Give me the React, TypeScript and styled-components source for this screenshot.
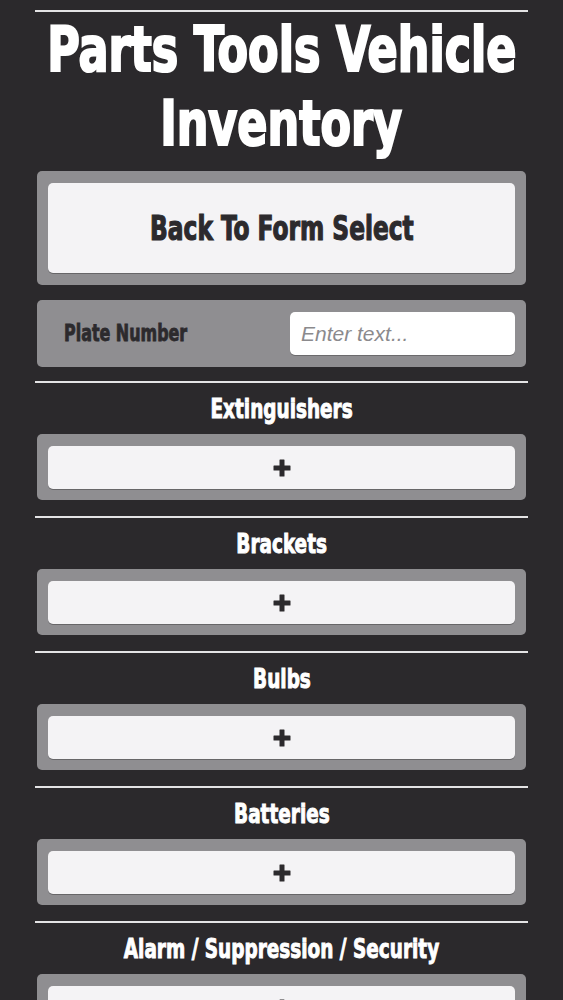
import React from 'react';
import styled, { createGlobalStyle } from 'styled-components';

const GlobalStyle = createGlobalStyle`
  html, body {
    margin: 0;
    padding: 0;
    background: #2b292c;
    overflow-x: hidden;
  }
`;

// Impact-like face: bold condensed, squeezed a bit further below
const display = `"DejaVu Sans", sans-serif`;

const Page = styled.div`
  width: 493px;
  margin-left: 35px;
  padding-top: 10px;
  display: flex;
  flex-direction: column;
`;

const Divider = styled.div`
  height: 2px;
  background: #e4e3e5;
`;

const Squeeze = styled.span<{ $origin?: string; $scale?: number }>`
  display: inline-block;
  white-space: nowrap;
  font-family: ${display};
  font-stretch: condensed;
  font-weight: 700;
  -webkit-text-stroke: 0.035em currentColor;
  transform: scaleX(${props => props.$scale ?? 0.76});
  transform-origin: ${props => props.$origin ?? 'center'};
`;

const Title = styled.h1`
  margin: 1px 0 10px;
  display: flex;
  flex-direction: column;
  align-items: center;
  font-size: 63px;
  line-height: 74px;
  font-weight: 700;
  color: #ffffff;
`;

const Panel = styled.div<{ $gap?: number }>`
  margin: 0 2px ${props => props.$gap ?? 0}px;
  padding: 12px 11px ${props => (props.$gap === 16 ? 11 : 12)}px;
  background: #8f8e91;
  border-radius: 5px;
  display: flex;
  align-items: center;
`;

const WideButton = styled.button<{ $tall?: boolean }>`
  flex: 1;
  height: ${props => (props.$tall ? 90 : 43)}px;
  border: none;
  border-radius: 5px;
  background: #f4f3f5;
  box-shadow: 0 1px 0 rgba(0, 0, 0, 0.28);
  color: #2c2a2d;
  font-size: 33px;
  display: flex;
  align-items: center;
  justify-content: center;
  cursor: pointer;
  padding: 0;
`;

const FieldLabel = styled.label`
  flex: 1;
  padding-left: 16px;
  font-size: 23px;
  color: #2c2a2d;
`;

const TextInput = styled.input`
  width: 225px;
  height: 43px;
  box-sizing: border-box;
  border: none;
  border-radius: 5px;
  background: #ffffff;
  box-shadow: 0 1px 0 rgba(0, 0, 0, 0.25);
  padding: 0 11px;
  font-family: "Liberation Sans", Arial, sans-serif;
  font-style: italic;
  font-size: 21px;
  color: #2c2a2d;

  &::placeholder {
    color: #8b8a8d;
  }
`;

const SectionHeading = styled.h2`
  height: 51px;
  margin: 0;
  display: flex;
  align-items: center;
  justify-content: center;
  font-size: 27px;
  color: #ffffff;
`;

const PlusIcon = () => (
    <svg width="18" height="18" viewBox="0 0 18 18" aria-hidden="true">
        <rect x="6.5" y="0.5" width="5" height="17" rx="0.5" fill="#2c2a2d" />
        <rect x="0.5" y="6.5" width="17" height="5" rx="0.5" fill="#2c2a2d" />
    </svg>
);

const sections = [
    'Extinguishers',
    'Brackets',
    'Bulbs',
    'Batteries',
    'Alarm / Suppression / Security',
];

const App: React.FC = () => {
    return (
        <>
            <GlobalStyle />
            <Page>
                <Divider />
                <Title>
                    <Squeeze $scale={0.785}>Parts Tools Vehicle</Squeeze>
                    <Squeeze $scale={0.785}>Inventory</Squeeze>
                </Title>

                <Panel $gap={15}>
                    <WideButton $tall>
                        <Squeeze $scale={0.785}>Back To Form Select</Squeeze>
                    </WideButton>
                </Panel>

                <Panel $gap={14}>
                    <FieldLabel htmlFor="plate">
                        <Squeeze $origin="left" $scale={0.77}>Plate Number</Squeeze>
                    </FieldLabel>
                    <TextInput id="plate" placeholder="Enter text..." />
                </Panel>

                {sections.map((name) => (
                    <React.Fragment key={name}>
                        <Divider />
                        <SectionHeading>
                            <Squeeze>{name}</Squeeze>
                        </SectionHeading>
                        <Panel $gap={16}>
                            <WideButton aria-label={`Add ${name}`}>
                                <PlusIcon />
                            </WideButton>
                        </Panel>
                    </React.Fragment>
                ))}
            </Page>
        </>
    );
};

export default App;
